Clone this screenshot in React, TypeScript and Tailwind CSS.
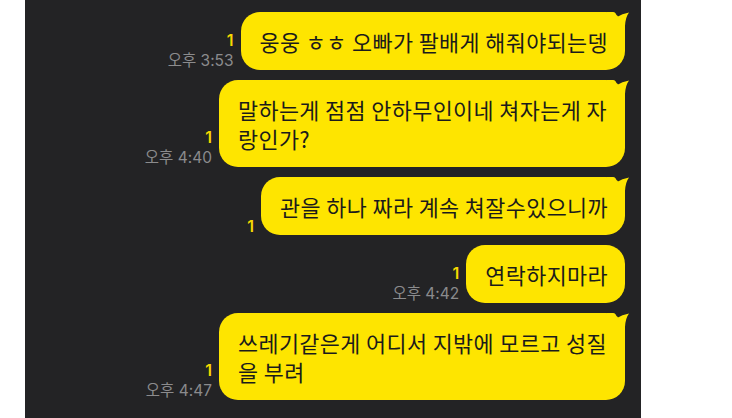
import React from 'react';

interface Message {
  id: number;
  text: string;
  unread?: string;
  time?: string;
  tail?: boolean;
}

const messages: Message[] = [
  { id: 1, text: '웅웅 ㅎㅎ 오빠가 팔배게 해줘야되는뎅', unread: '1', time: '오후 3:53', tail: true },
  { id: 2, text: '말하는게 점점 안하무인이네 쳐자는게 자랑인가?', unread: '1', time: '오후 4:40', tail: true },
  { id: 3, text: '관을 하나 짜라 계속 쳐잘수있으니까', unread: '1', tail: true },
  { id: 4, text: '연락하지마라', unread: '1', time: '오후 4:42' },
  { id: 5, text: '쓰레기같은게 어디서 지밖에 모르고 성질을 부려', unread: '1', time: '오후 4:47', tail: true },
];

function Tail() {
  return (
    <svg
      className="absolute top-0 right-[-6px]"
      width="24"
      height="22"
      viewBox="0 0 24 22"
    >
      <path d="M0 0 L6 0 Q9 0 10 5 Q15 1.5 22 0.5 Q18.5 5 18 14 L18 22 L0 22 Z" fill="#fee500" />
    </svg>
  );
}

function Bubble({ msg }: { msg: Message }) {
  return (
    <div className="flex items-end gap-[7px]">
      <div className="flex flex-col items-end pb-[1px] font-['Inter','Noto_Sans_CJK_KR',sans-serif]">
        {msg.unread && (
          <span className="text-[16px] leading-[16px] font-semibold text-[#f5d800]">{msg.unread}</span>
        )}
        {msg.time && (
          <span className="mt-[5px] text-[15.5px] leading-[16px] text-[#8b8b8d] whitespace-nowrap">{msg.time}</span>
        )}
      </div>
      <div className="relative max-w-[406px] rounded-[19px] bg-[#fee500] pl-[19px] pr-[17px] py-[14.5px] text-[21.8px] leading-[29px] tracking-[0.4px] text-[#1b1b1b] break-all">
        {msg.tail && <Tail />}
        <span className="relative">{msg.text}</span>
      </div>
    </div>
  );
}

export default function App() {
  return (
    <div
      className="w-[732px] h-[418px] bg-white flex overflow-hidden"
      style={{ fontFamily: '"Noto Sans CJK KR", "Noto Sans", sans-serif' }}
    >
      <div className="ml-[25px] w-[616px] h-full bg-[#232325] flex flex-col items-end gap-[10px] pt-[12px] pr-[16px]">
        {messages.map((m) => (
          <Bubble key={m.id} msg={m} />
        ))}
      </div>
    </div>
  );
}
